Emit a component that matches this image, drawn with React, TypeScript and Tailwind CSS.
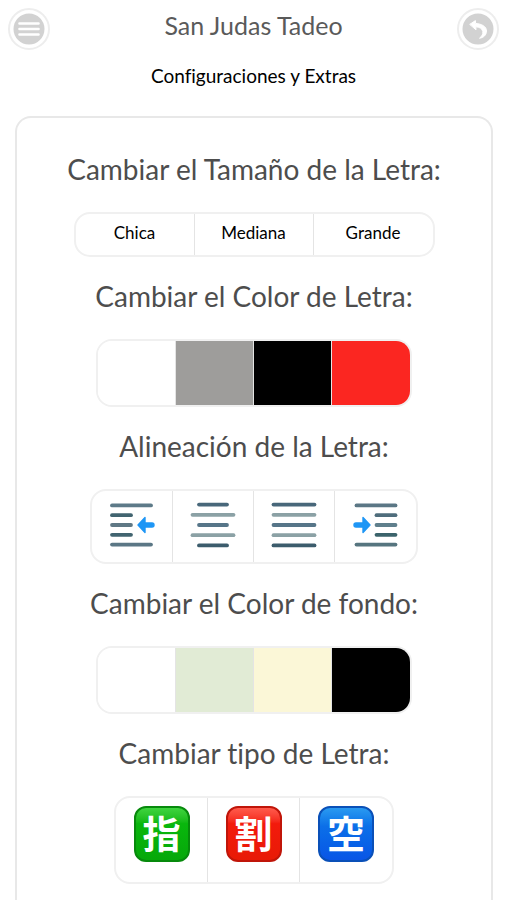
import type { ReactNode } from 'react'

const DARK = '#48677a'
const LIGHT = '#8ba1a5'

const fontSizes = ['Chica', 'Mediana', 'Grande']

const letterColors = [
  { name: 'Blanco', className: 'bg-white' },
  { name: 'Gris', className: 'bg-[#9e9d9b]' },
  { name: 'Negro', className: 'bg-black' },
  { name: 'Rojo', className: 'bg-[#fb2621]' },
]

const backgroundColors = [
  { name: 'Blanco', className: 'bg-white' },
  { name: 'Verde', className: 'bg-[#e1ebd5]' },
  { name: 'Crema', className: 'bg-[#fbf7d7]' },
  { name: 'Negro', className: 'bg-black' },
]

const typefaces = [
  {
    glyph: '指',
    className: 'border-[#078a0c] bg-linear-to-b from-[#3fd43f] via-[#09b70d] via-30% to-[#06a80a]',
  },
  {
    glyph: '割',
    className: 'border-[#c01509] bg-linear-to-b from-[#ff5a4c] via-[#f31a0c] via-30% to-[#e81a06]',
  },
  {
    glyph: '空',
    className: 'border-[#0a50b8] bg-linear-to-b from-[#2a9af0] via-[#0c6fe8] via-35% to-[#0a55e6]',
  },
]

type Line = [x1: number, x2: number, y: number, color: string]

const alignments: { name: string; lines: Line[]; arrow?: string }[] = [
  {
    name: 'Izquierda',
    lines: [
      [4, 43, 4.4, '#5d7a88'],
      [4, 23, 14.2, '#416470'],
      [4, 23, 24, '#5f7885'],
      [4, 23, 33.8, '#416470'],
      [4, 43, 43.6, '#5b7785'],
    ],
    arrow: 'M30 24L37 16.5V22H44A2 2 0 0 1 44 26H37V31.5Z',
  },
  {
    name: 'Centro',
    lines: [
      [10, 38, 3.6, DARK],
      [3.5, 44.5, 13.8, LIGHT],
      [10, 38, 24, '#567588'],
      [3.5, 44.5, 34.2, LIGHT],
      [10, 38, 44.4, '#3c5c6c'],
    ],
  },
  {
    name: 'Justificado',
    lines: [
      [3.5, 44.5, 3.6, DARK],
      [3.5, 44.5, 13.8, LIGHT],
      [3.5, 44.5, 24, '#567588'],
      [3.5, 44.5, 34.2, LIGHT],
      [3.5, 44.5, 44.4, '#3c5c6c'],
    ],
  },
  {
    name: 'Derecha',
    lines: [
      [4.5, 43.5, 4.4, '#5b7785'],
      [24.5, 43.5, 14.2, '#4f6d7c'],
      [24.5, 43.5, 24, '#5f7f8c'],
      [24.5, 43.5, 33.8, '#3b636b'],
      [4.5, 43.5, 43.6, '#56757f'],
    ],
    arrow: 'M18 24L11 16.5V22H4A2 2 0 0 0 4 26H11V31.5Z',
  },
]

function AlignIcon({ lines, arrow }: { lines: Line[]; arrow?: string }) {
  return (
    <svg viewBox="0 0 48 48" className="size-12" aria-hidden="true">
      {lines.map(([x1, x2, y, color]) => (
        <line
          key={y}
          x1={x1}
          x2={x2}
          y1={y}
          y2={y}
          stroke={color}
          strokeWidth="3.8"
          strokeLinecap="round"
        />
      ))}
      {arrow && (
        <path
          d={arrow}
          fill="#1e96f5"
          stroke="#1e96f5"
          strokeWidth="1.4"
          strokeLinejoin="round"
        />
      )}
    </svg>
  )
}

function RoundButton({ label, children }: { label: string; children: ReactNode }) {
  return (
    <button
      type="button"
      aria-label={label}
      className="flex size-[42px] shrink-0 items-center justify-center rounded-full border-2 border-[#ededed] bg-white"
    >
      <svg
        viewBox="0 0 32 32"
        className="size-8"
        fill="none"
        stroke="#fff"
        strokeWidth="2.6"
        strokeLinecap="round"
      >
        <circle cx="16" cy="16" r="15.5" fill="#d2d2d2" stroke="none" />
        {children}
      </svg>
    </button>
  )
}

function Setting({ title, children }: { title: string; children: ReactNode }) {
  return (
    <section className="flex flex-col items-center">
      <h2 className="mb-[25px] text-center text-[28px] leading-9 text-[#4d4d4d]">{title}</h2>
      <div className="flex divide-x divide-[#e4e4e4] overflow-hidden rounded-2xl border-2 border-[#f0f0f0]">
        {children}
      </div>
    </section>
  )
}

export default function App() {
  return (
    <div className="flex min-h-screen flex-col bg-white font-[Lato,'Noto_Sans_CJK_JP',sans-serif] [font-variant-ligatures:none]">
      <header className="flex items-start justify-between pt-2 pr-[7px] pl-2">
        <RoundButton label="Menú">
          <path d="M6.5 10.5H25.5M6.5 16H25.5M6.5 21.5H25.5" />
        </RoundButton>
        <div className="text-center">
          <h1 className="text-[25px] leading-[34px] text-[#5a5a5a]">San Judas Tadeo</h1>
          <p className="mt-4 text-[19px] leading-9 text-black">Configuraciones y Extras</p>
        </div>
        <RoundButton label="Regresar">
          <path
            d="M8 11.2L13.4 7.6L13.600 10.400C20 11 24.500 13.500 24.500 18C24.500 22 21.500 24.800 17.500 25.200C20 23.200 21.200 21 20.800 18.600C20.200 15.600 17.500 14 13.800 13.800L14 16.400Z"
            fill="#fff"
            strokeWidth="1"
            strokeLinejoin="round"
          />
        </RoundButton>
      </header>

      <main className="mt-[22px] mr-[13px] ml-[15px] flex flex-1 flex-col gap-[21px] rounded-t-2xl border-2 border-b-0 border-[#e8e8e8] pt-[33px]">
        <Setting title="Cambiar el Tamaño de la Letra:">
          {fontSizes.map((size) => (
            <button key={size} type="button" className="h-[41px] w-[119px] pb-1 text-[17px] text-black">
              {size}
            </button>
          ))}
        </Setting>

        <Setting title="Cambiar el Color de Letra:">
          {letterColors.map(({ name, className }) => (
            <button key={name} type="button" aria-label={name} className={`h-16 w-[78px] ${className}`} />
          ))}
        </Setting>

        <Setting title="Alineación de la Letra:">
          {alignments.map(({ name, lines, arrow }) => (
            <button
              key={name}
              type="button"
              aria-label={name}
              className="flex h-[71px] w-[81px] items-center justify-center pb-[3px]"
            >
              <AlignIcon lines={lines} arrow={arrow} />
            </button>
          ))}
        </Setting>

        <Setting title="Cambiar el Color de fondo:">
          {backgroundColors.map(({ name, className }) => (
            <button key={name} type="button" aria-label={name} className={`h-16 w-[78px] ${className}`} />
          ))}
        </Setting>

        <Setting title="Cambiar tipo de Letra:">
          {typefaces.map(({ glyph, className }) => (
            <button key={glyph} type="button" className="flex h-[84px] w-[92px] justify-center pt-2">
              <span
                className={`flex size-14 items-center justify-center rounded-xl border-2 pb-0.5 text-[38px] leading-none font-bold text-white ${className}`}
              >
                {glyph}
              </span>
            </button>
          ))}
        </Setting>
      </main>
    </div>
  )
}
